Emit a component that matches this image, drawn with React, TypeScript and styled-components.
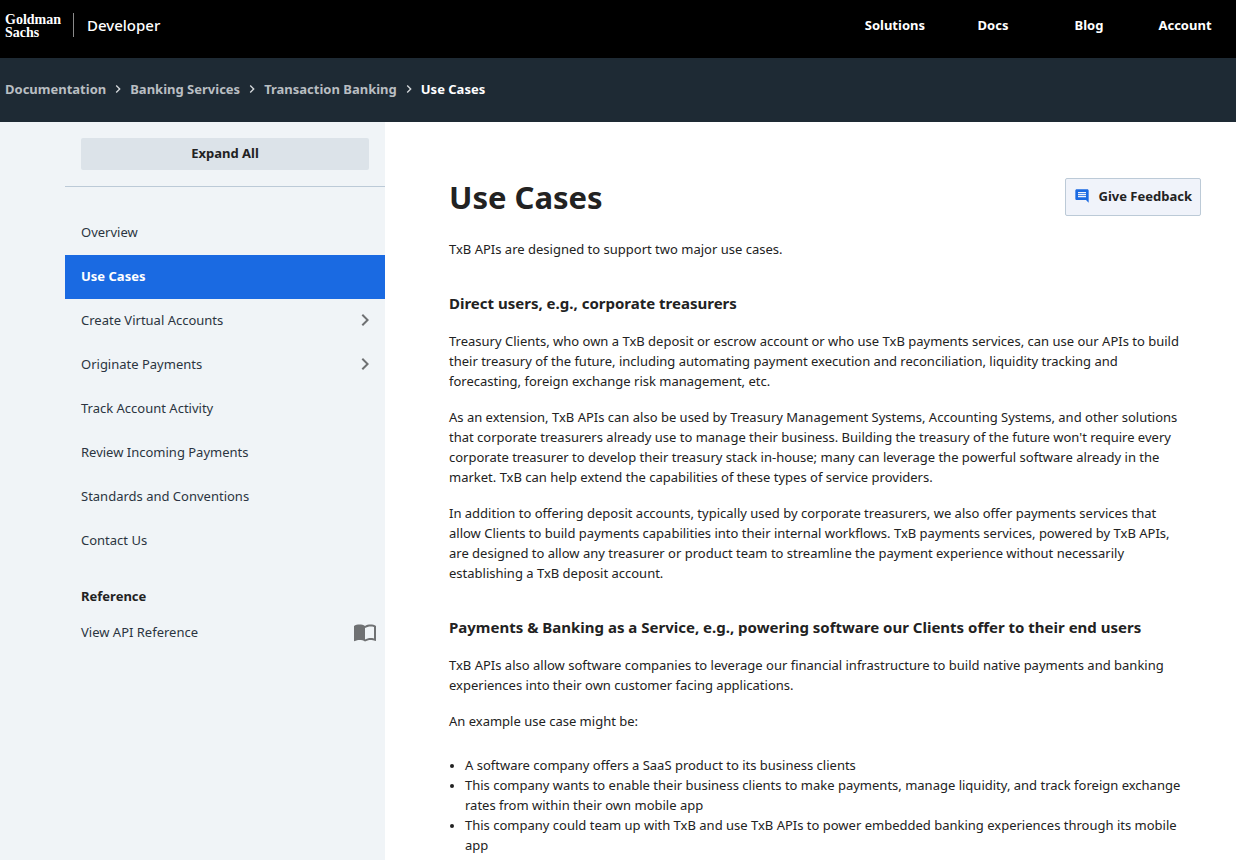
import React from "react";
import styled, { createGlobalStyle } from "styled-components";
import { MdChevronRight, MdComment, MdImportContacts } from "react-icons/md";

const GlobalStyle = createGlobalStyle`
  * { box-sizing: border-box; }
  body {
    margin: 0;
    background: #ffffff;
    color: #222222;
    font-family: "Noto Sans", "Open Sans", sans-serif;
    font-size: 13px;
    line-height: 20px;
  }
  a { color: inherit; text-decoration: none; }
  ul, ol { margin: 0; padding: 0; }
`;

const Page = styled.div`
  display: flex;
  flex-direction: column;
  min-height: 100vh;
`;

const TopBar = styled.header`
  display: flex;
  align-items: center;
  justify-content: space-between;
  padding: 11px 3px 19px 5px;
  background: #000000;
  color: #ffffff;
`;

const Brand = styled.a`
  display: flex;
  align-items: center;
`;

const Logo = styled.span`
  display: flex;
  flex-direction: column;
  padding-top: 2px;
  font-family: "Liberation Serif", serif;
  font-size: 14px;
  font-weight: 700;
  line-height: 13px;
`;

const Divider = styled.span`
  width: 1px;
  height: 24px;
  margin: 0 13px 0 12px;
  background: #8a8a8a;
`;

const Product = styled.span`
  font-size: 15px;
  font-weight: 500;
  line-height: 24px;
`;

const TopNav = styled.nav`
  display: flex;
`;

const TopLink = styled.a`
  min-width: 96px;
  padding: 0 20px;
  text-align: center;
  font-weight: 700;
`;

const CrumbBar = styled.nav`
  padding: 21px 5px 23px;
  background: #1e2a34;
`;

const CrumbList = styled.ol`
  display: flex;
  list-style: none;
  font-weight: 700;
`;

const Crumb = styled.li<{ $current?: boolean }>`
  display: flex;
  align-items: center;
  color: ${(p) => (p.$current ? "#ffffff" : "#b9bec2")};

  svg {
    width: 16px;
    height: 16px;
    margin: 0 4px;
    color: #d5d9dc;
  }
`;

const Columns = styled.div`
  display: flex;
  flex: 1;
`;

const Sidebar = styled.aside`
  flex: none;
  padding-left: 65px;
  background: #f0f4f7;
`;

const SidebarInner = styled.div`
  width: 320px;
`;

const ExpandArea = styled.div`
  padding: 16px;
  border-bottom: 1px solid #bccad7;
`;

const ExpandButton = styled.button`
  display: block;
  width: 100%;
  height: 32px;
  padding: 0 0 2px;
  border: 0;
  border-radius: 2px;
  background: #dce3e9;
  color: #222222;
  font: inherit;
  font-weight: 700;
`;

const DocList = styled.ul`
  padding: 24px 0 20px;
  list-style: none;
`;

const DocLink = styled.a<{ $active?: boolean }>`
  display: flex;
  align-items: center;
  justify-content: space-between;
  height: 44px;
  padding: 0 8px 2px 16px;
  background: ${(p) => (p.$active ? "#1a6ae2" : "transparent")};
  color: ${(p) => (p.$active ? "#ffffff" : "#2b3441")};
  font-weight: ${(p) => (p.$active ? 700 : 400)};

  svg {
    width: 24px;
    height: 24px;
    color: #6f7173;
  }
`;

const SidebarHeading = styled.h2`
  margin: 0;
  padding: 3px 16px 5px;
  font-size: 13px;
  font-weight: 700;
  line-height: 20px;
`;

const Main = styled.main`
  flex: 1;
  min-width: 0;
  padding: 56px 35px 0 64px;
`;

const TitleRow = styled.div`
  display: flex;
  align-items: center;
  justify-content: space-between;
  margin-bottom: 23px;
`;

const Title = styled.h1`
  margin: 0;
  font-size: 31px;
  font-weight: 700;
  line-height: 38px;
`;

const FeedbackButton = styled.button`
  display: flex;
  align-items: center;
  gap: 8px;
  height: 38px;
  padding: 0 8px 2px;
  border: 1px solid #bccad7;
  border-radius: 2px;
  background: #f0f3fa;
  color: #222222;
  font: inherit;
  font-weight: 700;

  svg {
    width: 16px;
    height: 16px;
    color: #1a6ae2;
  }
`;

const Article = styled.article`
  padding-right: 12px;
`;

const SectionHeading = styled.h2`
  margin: 32px 0 16px;
  font-size: 15px;
  font-weight: 700;
  line-height: 24px;
`;

const Paragraph = styled.p`
  margin: 0 0 16px;
`;

const Bullets = styled.ul`
  margin: 24px 0 16px;
  padding-left: 16px;

  li::marker {
    font-size: 11px;
  }
`;

const topLinks = ["Solutions", "Docs", "Blog", "Account"];
const crumbs = ["Documentation", "Banking Services", "Transaction Banking", "Use Cases"];
const docs = [
  { label: "Overview" },
  { label: "Use Cases", active: true },
  { label: "Create Virtual Accounts", nested: true },
  { label: "Originate Payments", nested: true },
  { label: "Track Account Activity" },
  { label: "Review Incoming Payments" },
  { label: "Standards and Conventions" },
  { label: "Contact Us" },
];

export default function App() {
  return (
    <Page>
      <GlobalStyle />
      <TopBar>
        <Brand href="#">
          <Logo>
            <span>Goldman</span>
            <span>Sachs</span>
          </Logo>
          <Divider />
          <Product>Developer</Product>
        </Brand>
        <TopNav>
          {topLinks.map((label) => (
            <TopLink href="#" key={label}>{label}</TopLink>
          ))}
        </TopNav>
      </TopBar>
      <CrumbBar aria-label="Breadcrumb">
        <CrumbList>
          {crumbs.map((label, i) => {
            const current = i === crumbs.length - 1;
            return (
              <Crumb key={label} $current={current}>
                <a href="#" aria-current={current ? "page" : undefined}>{label}</a>
                {!current && <MdChevronRight />}
              </Crumb>
            );
          })}
        </CrumbList>
      </CrumbBar>
      <Columns>
        <Sidebar>
          <SidebarInner>
            <ExpandArea>
              <ExpandButton type="button">Expand All</ExpandButton>
            </ExpandArea>
            <DocList>
              {docs.map((d) => (
                <li key={d.label}>
                  <DocLink href="#" $active={d.active}>
                    {d.label}
                    {d.nested && <MdChevronRight />}
                  </DocLink>
                </li>
              ))}
            </DocList>
            <SidebarHeading>Reference</SidebarHeading>
            <DocLink href="#">
              View API Reference
              <MdImportContacts />
            </DocLink>
          </SidebarInner>
        </Sidebar>
        <Main>
          <TitleRow>
            <Title>Use Cases</Title>
            <FeedbackButton type="button">
              <MdComment />
              Give Feedback
            </FeedbackButton>
          </TitleRow>
          <Article>
            <Paragraph>TxB APIs are designed to support two major use cases.</Paragraph>
            <SectionHeading>Direct users, e.g., corporate treasurers</SectionHeading>
            <Paragraph>
              Treasury Clients, who own a TxB deposit or escrow account or who use TxB payments services, can use our
              APIs to build their treasury of the future, including automating payment execution and reconciliation,
              liquidity tracking and forecasting, foreign exchange risk management, etc.
            </Paragraph>
            <Paragraph>
              As an extension, TxB APIs can also be used by Treasury Management Systems, Accounting Systems, and other
              solutions that corporate treasurers already use to manage their business. Building the treasury of the
              future won't require every corporate treasurer to develop their treasury stack in-house; many can leverage
              the powerful software already in the market. TxB can help extend the capabilities of these types of
              service providers.
            </Paragraph>
            <Paragraph>
              In addition to offering deposit accounts, typically used by corporate treasurers, we also offer payments
              services that allow Clients to build payments capabilities into their internal workflows. TxB payments
              services, powered by TxB APIs, are designed to allow any treasurer or product team to streamline the
              payment experience without necessarily establishing a TxB deposit account.
            </Paragraph>
            <SectionHeading>
              Payments &amp; Banking as a Service, e.g., powering software our Clients offer to their end users
            </SectionHeading>
            <Paragraph>
              TxB APIs also allow software companies to leverage our financial infrastructure to build native payments
              and banking experiences into their own customer facing applications.
            </Paragraph>
            <Paragraph>An example use case might be:</Paragraph>
            <Bullets>
              <li>A software company offers a SaaS product to its business clients</li>
              <li>
                This company wants to enable their business clients to make payments, manage liquidity, and track
                foreign exchange rates from within their own mobile app
              </li>
              <li>
                This company could team up with TxB and use TxB APIs to power embedded banking experiences through its
                mobile app
              </li>
            </Bullets>
          </Article>
        </Main>
      </Columns>
    </Page>
  );
}
